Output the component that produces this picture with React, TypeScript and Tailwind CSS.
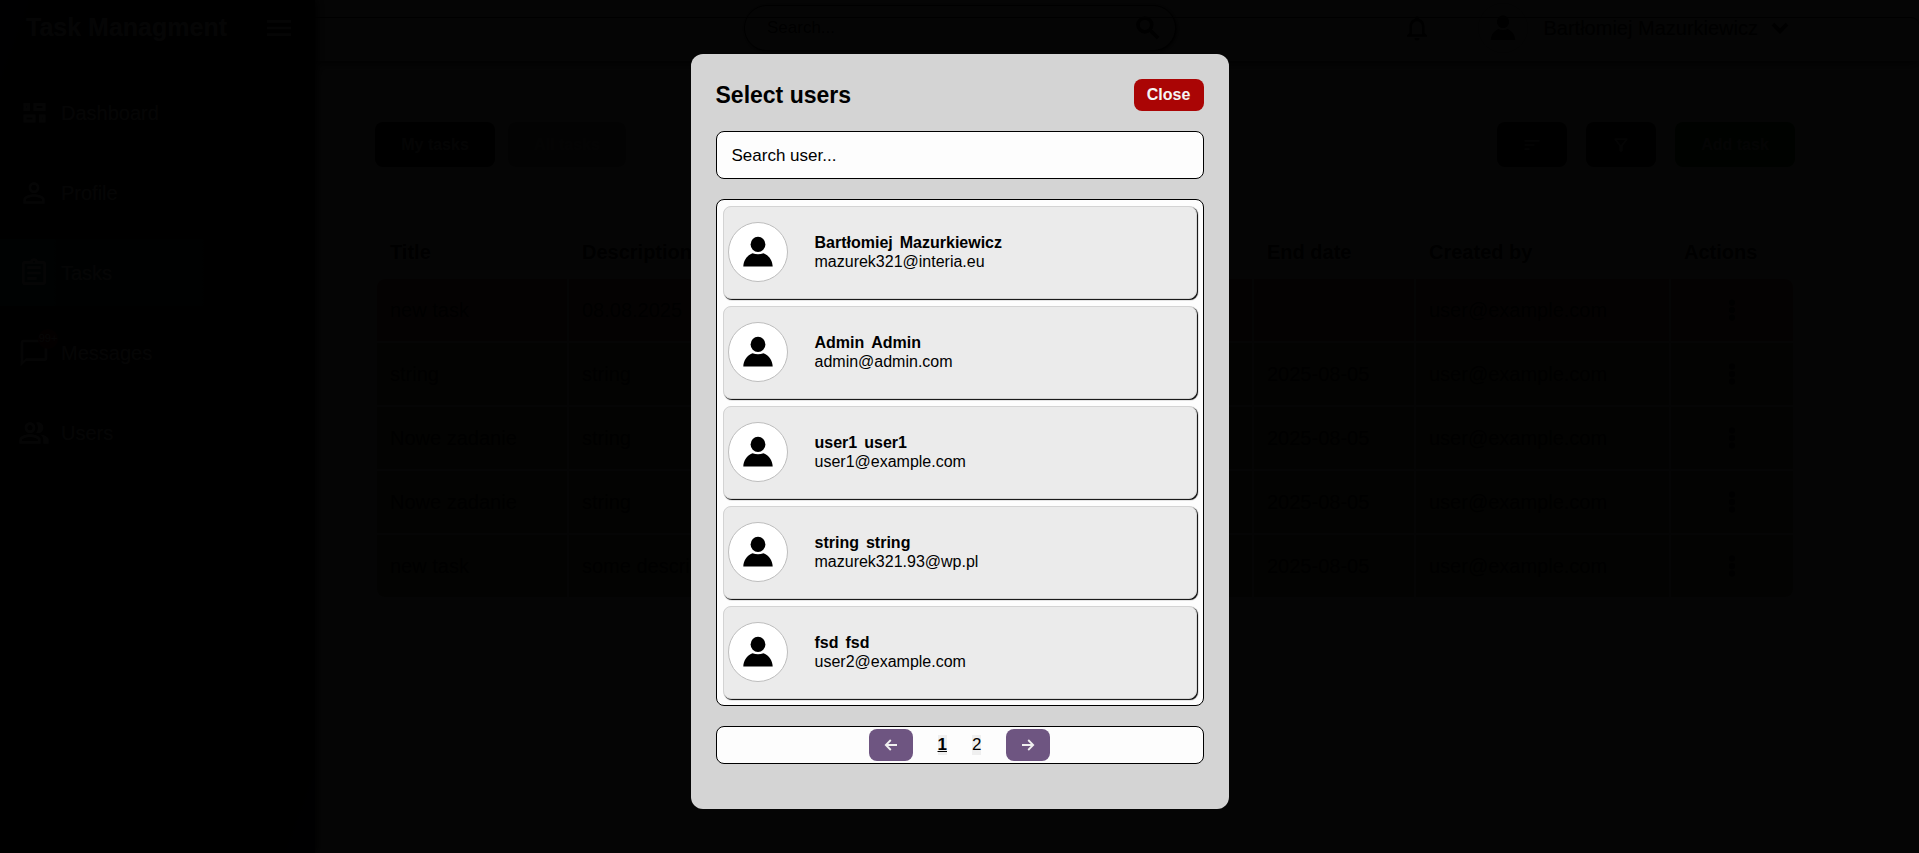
import type { ReactNode } from "react";
import {
  MdChatBubbleOutline,
  MdKeyboardArrowDown,
  MdMenu,
  MdMoreVert,
  MdNotificationsNone,
  MdOutlineAssignment,
  MdOutlineFilterAlt,
  MdOutlinePeopleAlt,
  MdPersonOutline,
  MdSearch,
  MdSort,
} from "react-icons/md";

const users = [
  { first: "Bartłomiej", last: "Mazurkiewicz", email: "mazurek321@interia.eu" },
  { first: "Admin", last: "Admin", email: "admin@admin.com" },
  { first: "user1", last: "user1", email: "user1@example.com" },
  { first: "string", last: "string", email: "mazurek321.93@wp.pl" },
  { first: "fsd", last: "fsd", email: "user2@example.com" },
];

const tasks = [
  { title: "new task", description: "08.08.2025", end: "", author: "user@example.com", late: true },
  { title: "string", description: "string", end: "2025-08-05", author: "user@example.com", late: false },
  { title: "Nowe zadanie", description: "string", end: "2025-08-05", author: "user@example.com", late: false },
  { title: "Nowe zadanie", description: "string", end: "2025-08-05", author: "user@example.com", late: false },
  { title: "new task", description: "some description", end: "2025-08-05", author: "user@example.com", late: false },
];

function Avatar({ className }: { className: string }) {
  return (
    <svg viewBox="0 0 60 60" className={className} aria-hidden="true">
      <circle cx="30" cy="30" r="29.5" fill="#fff" stroke="#bdbdbd" />
      <ellipse cx="30" cy="22.4" rx="7.4" ry="7.6" />
      <path d="M15.3 44.5C15.5 39 18.5 33.6 24.5 31.2Q30 33.4 35.5 31.2C41.5 33.6 44.5 39 44.7 44.5Z" />
    </svg>
  );
}

function DashboardIcon() {
  return (
    <svg viewBox="0 0 32 32" className="size-8" fill="none" stroke="currentColor" strokeWidth="3" aria-hidden="true">
      <path d="M7 7.5h3.5v5H7zM17 7.5h9v5h-9zM7 19h9v5H7zM22.5 19H26v5h-3.5z" />
    </svg>
  );
}

function ArrowIcon({ direction }: { direction: "left" | "right" }) {
  return (
    <svg viewBox="0 0 14 14" className="size-[14px]" fill="none" stroke="currentColor" strokeWidth="1.8" aria-hidden="true">
      <path d={direction === "left" ? "M6.8 2 1.8 7l5 5M1.8 7H13" : "M7.2 2l5 5-5 5M12.2 7H1"} />
    </svg>
  );
}

function NavItem({
  icon,
  label,
  active = false,
  badge,
}: {
  icon: ReactNode;
  label: string;
  active?: boolean;
  badge?: string;
}) {
  return (
    <li>
      <a
        href="#"
        className={
          active
            ? "flex h-[67px] items-center gap-[11px] bg-linear-to-r from-[#006464] via-[#003c3c] to-transparent pl-[18px] text-xl"
            : "flex h-[67px] items-center gap-[11px] pl-[18px] text-xl"
        }
      >
        <span className="relative text-[32px]">
          {icon}
          {badge && (
            <span className="absolute -top-2 left-5 flex size-5 items-center justify-center rounded-full bg-[#960000] text-[11px]">
              {badge}
            </span>
          )}
        </span>
        {label}
      </a>
    </li>
  );
}

function Sidebar() {
  return (
    <aside className="relative z-10 w-[315px] shrink-0 bg-linear-to-br from-[#000032] via-black to-[#000032] text-white shadow-[2px_0_8px_black]">
      <div className="flex h-14 items-center justify-between pr-5 pl-[26px]">
        <span className="text-[25px] font-bold">Task Managment</span>
        <button type="button" aria-label="Toggle menu" className="text-[32px]">
          <MdMenu />
        </button>
      </div>
      <ul className="mt-[23px] flex flex-col gap-[13px]">
        <NavItem icon={<DashboardIcon />} label="Dashboard" />
        <NavItem icon={<MdPersonOutline />} label="Profile" />
        <NavItem icon={<MdOutlineAssignment />} label="Tasks" active />
        <NavItem icon={<MdChatBubbleOutline />} label="Messages" badge="99+" />
        <NavItem icon={<MdOutlinePeopleAlt />} label="Users" />
      </ul>
    </aside>
  );
}

function TopBar() {
  return (
    <header className="relative flex h-[61px] items-center justify-between bg-[#dcdcdc] pr-[124px] pb-[5px] pl-[429px] shadow-[0_2px_12px_black]">
      <div className="flex h-[46px] w-[432px] items-center rounded-full border border-black bg-white pr-3 pl-[22px] shadow-[1px_1px_3px_black]">
        <input
          type="search"
          aria-label="Search"
          placeholder="Search..."
          className="min-w-0 grow text-[17px] outline-none placeholder:text-black"
        />
        <button type="button" aria-label="Run search" className="text-3xl">
          <MdSearch className="[&>path:last-child]:stroke-1" />
        </button>
      </div>
      <div className="flex items-center text-xl">
        <button type="button" aria-label="Notifications" className="mr-[46px] text-3xl">
          <MdNotificationsNone />
        </button>
        <button type="button" className="flex items-center">
          <Avatar className="mr-4 size-[50px]" />
          Bartłomiej Mazurkiewicz
          <MdKeyboardArrowDown className="ml-[7px] text-3xl [&>path:last-child]:stroke-1" />
        </button>
      </div>
      <div className="pointer-events-none absolute inset-x-0 top-[17px] bottom-0 rounded-tr-lg border-t border-black" />
    </header>
  );
}

function TaskTable() {
  return (
    <table className="mt-[58px] w-full table-fixed border-separate border-spacing-[2px] text-left text-xl">
      <thead>
        <tr className="h-[50px]">
          <th className="w-[190px] pl-[13px]">Title</th>
          <th className="pl-[13px]">Description</th>
          <th className="w-[160px] pl-[13px]">End date</th>
          <th className="w-[253px] pl-[13px]">Created by</th>
          <th className="w-[122px] pl-[13px]">Actions</th>
        </tr>
      </thead>
      <tbody>
        {tasks.map((task, index) => (
          <tr
            key={index}
            className={
              task.late
                ? "h-[62px] *:bg-[#c8786e] *:first:rounded-tl-lg *:last:rounded-tr-lg"
                : "h-[62px] *:bg-[#91915a] last:*:first:rounded-bl-lg last:*:last:rounded-br-lg"
            }
          >
            <td className="pl-[13px]">{task.title}</td>
            <td className="pl-[13px]">{task.description}</td>
            <td className="pl-[13px]">{task.end}</td>
            <td className="pl-[13px]">{task.author}</td>
            <td>
              <button type="button" aria-label="Task actions" className="mx-auto block text-3xl">
                <MdMoreVert className="[&>path:last-child]:stroke-1" />
              </button>
            </td>
          </tr>
        ))}
      </tbody>
    </table>
  );
}

function TasksPage() {
  return (
    <main className="pt-[61px] pr-[124px] pl-[60px]">
      <div className="flex items-center justify-between font-bold">
        <div className="flex gap-[13px] text-[#d2d2d2]">
          <button type="button" className="h-[45px] w-[120px] rounded-lg bg-black">
            My tasks
          </button>
          <button type="button" className="h-[45px] w-[118px] rounded-lg bg-[#969696]">
            All tasks
          </button>
        </div>
        <div className="flex gap-[19px] text-[#d2d2d2]">
          <button type="button" aria-label="Sort" className="flex h-[45px] w-[70px] items-center justify-center rounded-lg bg-black text-xl">
            <MdSort />
          </button>
          <button type="button" aria-label="Filter" className="flex h-[45px] w-[70px] items-center justify-center rounded-lg bg-black text-xl">
            <MdOutlineFilterAlt />
          </button>
          <button type="button" className="h-[45px] w-[120px] rounded-lg bg-[#006400]">
            Add task
          </button>
        </div>
      </div>
      <TaskTable />
    </main>
  );
}

function SelectUsersDialog() {
  return (
    <div className="fixed inset-0 z-20 flex items-start justify-center bg-black/98 pt-[54px]">
      <section
        role="dialog"
        aria-labelledby="dialog-title"
        className="flex w-[538px] flex-col gap-5 rounded-xl bg-[#d4d4d4] px-[25px] pt-[25px] pb-[45px]"
      >
        <div className="flex items-center justify-between">
          <h2 id="dialog-title" className="text-[23px] leading-8 font-bold">
            Select users
          </h2>
          <button type="button" className="h-8 w-[70px] rounded-lg bg-[#aa0505] font-bold text-[#f5f5f5]">
            Close
          </button>
        </div>
        <input
          type="text"
          aria-label="Search user"
          placeholder="Search user..."
          className="h-12 rounded-lg border border-black bg-[#fdfdfd] px-[15px] pt-[2px] text-[17px] outline-none placeholder:text-black"
        />
        <ul className="flex flex-col gap-[7px] rounded-lg border border-black bg-[#fdfdfd] p-[6px]">
          {users.map((user) => (
            <li key={user.email}>
              <button
                type="button"
                className="flex h-[93px] w-full items-center gap-[27px] rounded-lg border border-[#d3d3d3] bg-[#ebebeb] pb-[2px] pl-1 text-left shadow-[1px_1px_1px_black]"
              >
                <Avatar className="size-[60px]" />
                <span className="flex flex-col leading-[19px]">
                  <span className="flex gap-[7px] font-bold">
                    <span>{user.first}</span>
                    <span>{user.last}</span>
                  </span>
                  <span>{user.email}</span>
                </span>
              </button>
            </li>
          ))}
        </ul>
        <nav
          aria-label="Pages"
          className="flex h-[38px] items-center justify-center gap-[25px] rounded-lg border border-black bg-[#fdfdfd] text-[17px]"
        >
          <button
            type="button"
            aria-label="Previous page"
            className="flex h-8 w-11 items-center justify-center rounded-lg bg-[#6e5581] text-[#f0f0f0]"
          >
            <ArrowIcon direction="left" />
          </button>
          <button type="button" className="bg-[#efefef] leading-5 font-bold underline">
            1
          </button>
          <button type="button" className="bg-[#efefef] leading-5">
            2
          </button>
          <button
            type="button"
            aria-label="Next page"
            className="flex h-8 w-11 items-center justify-center rounded-lg bg-[#6e5581] text-[#f0f0f0]"
          >
            <ArrowIcon direction="right" />
          </button>
        </nav>
      </section>
    </div>
  );
}

export default function App() {
  return (
    <div className="flex min-h-screen bg-white font-['Liberation_Sans',Arial,sans-serif] text-black">
      <Sidebar />
      <div className="min-w-0 grow">
        <TopBar />
        <TasksPage />
      </div>
      <SelectUsersDialog />
    </div>
  );
}
